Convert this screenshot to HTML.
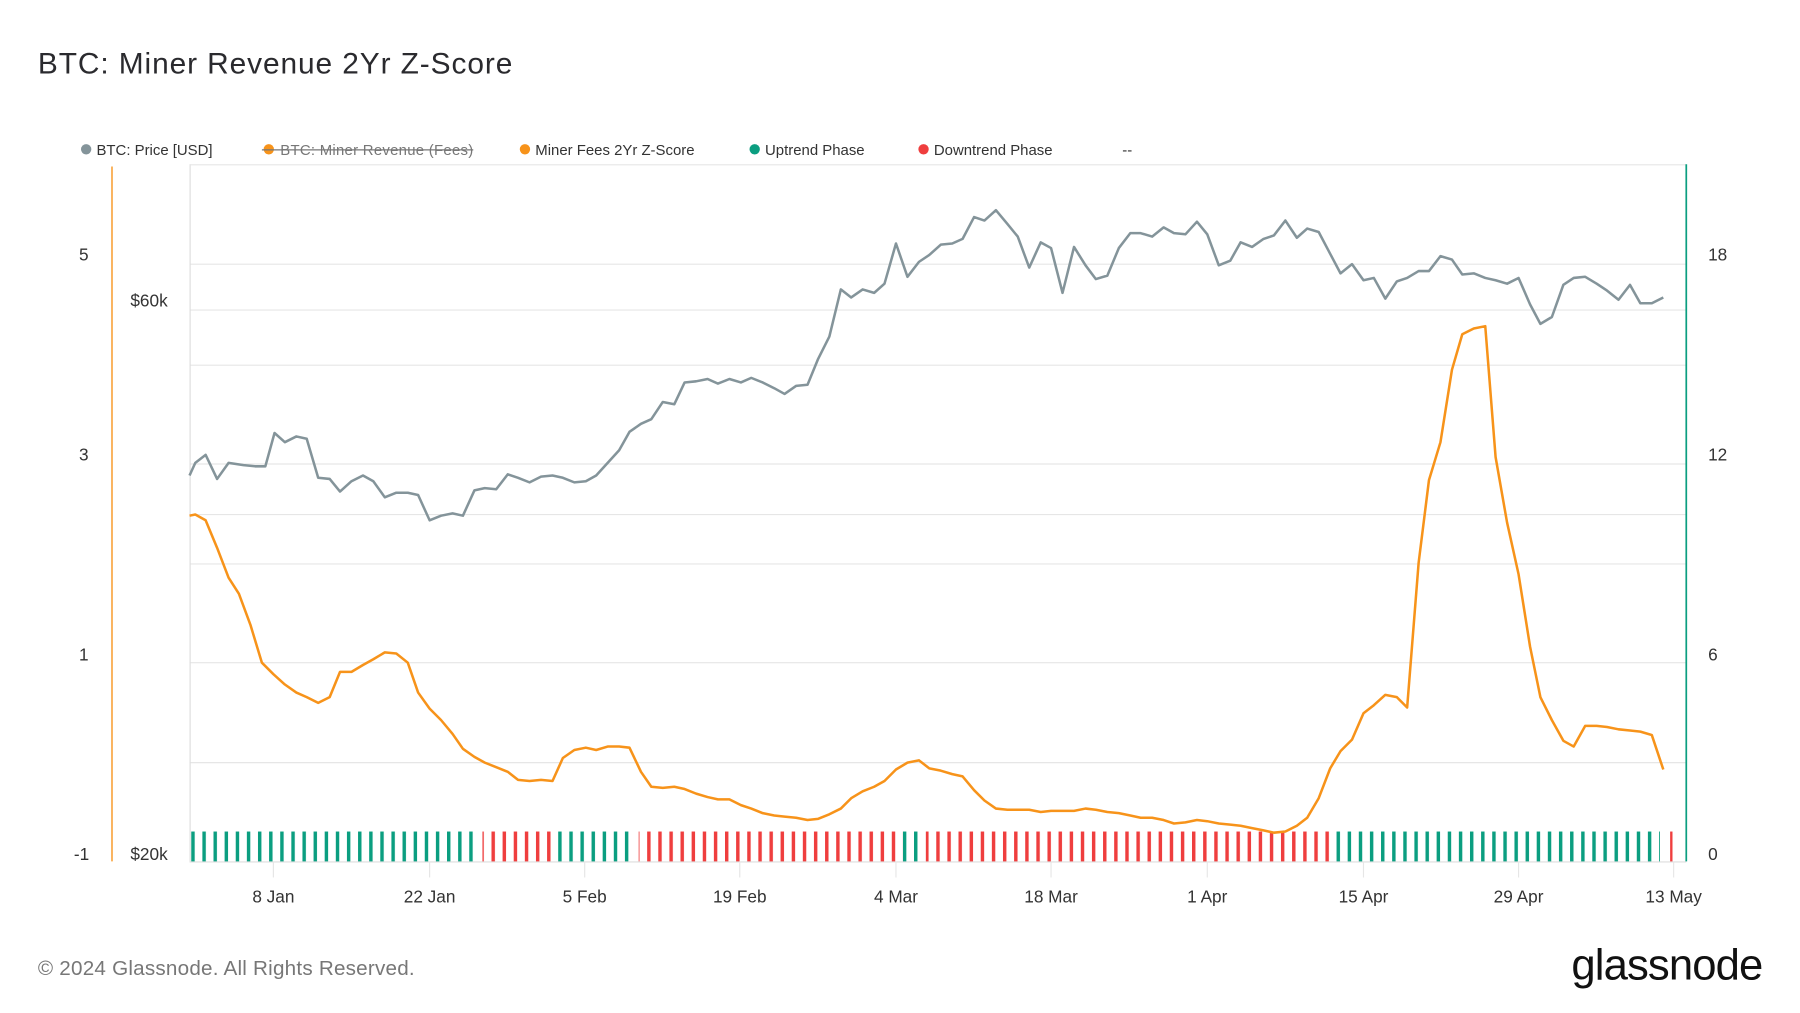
<!DOCTYPE html>
<html><head><meta charset="utf-8"><style>html,body{margin:0;padding:0;background:#fff;overflow:hidden}svg{display:block}</style></head><body>
<svg width="1800" height="1013" viewBox="0 0 1567 882" preserveAspectRatio="none" xmlns="http://www.w3.org/2000/svg" font-family="Liberation Sans, sans-serif">
<defs>
<pattern id="pg" patternUnits="userSpaceOnUse" x="166.5" y="0" width="9.68" height="900"><rect x="0" y="0" width="3" height="900" rx="1" fill="#0b9e80"/></pattern>
<pattern id="pr" patternUnits="userSpaceOnUse" x="166.5" y="0" width="9.68" height="900"><rect x="0" y="0" width="3" height="900" rx="1" fill="#ef3e3e"/></pattern>
</defs>
<rect width="1567" height="882" fill="#fff"/>
<text x="33" y="64" font-size="26" fill="#2a2a2e" textLength="413">BTC: Miner Revenue 2Yr Z-Score</text>
<g font-size="13" fill="#333">
<circle cx="75" cy="130" r="4.5" fill="#84949a"/><text x="84" y="135">BTC: Price [USD]</text>
<circle cx="234" cy="130" r="4.5" fill="#f7931a"/><text x="244" y="135" fill="#777" textLength="168">BTC: Miner Revenue (Fees)</text><line x1="228" y1="130.5" x2="412" y2="130.5" stroke="#777" stroke-width="1"/>
<circle cx="457" cy="130" r="4.5" fill="#f7931a"/><text x="466" y="135">Miner Fees 2Yr Z-Score</text>
<circle cx="657" cy="130" r="4.5" fill="#0b9e80"/><text x="666" y="135">Uptrend Phase</text>
<circle cx="804" cy="130" r="4.5" fill="#ef3e3e"/><text x="813" y="135">Downtrend Phase</text>
<text x="977" y="135">--</text>
</g>
<g stroke="#e6e6e6" stroke-width="1">
<line x1="165" y1="230" x2="1468" y2="230"/><line x1="165" y1="270" x2="1468" y2="270"/><line x1="165" y1="318" x2="1468" y2="318"/><line x1="165" y1="404" x2="1468" y2="404"/><line x1="165" y1="448" x2="1468" y2="448"/><line x1="165" y1="491" x2="1468" y2="491"/><line x1="165" y1="577" x2="1468" y2="577"/><line x1="165" y1="664" x2="1468" y2="664"/>
<line x1="165.5" y1="143" x2="165.5" y2="750" stroke="#ddd"/>
<line x1="165" y1="143.5" x2="1468" y2="143.5"/>
<line x1="165" y1="750.5" x2="1468" y2="750.5" stroke="#ddd"/>
<line x1="238" y1="750" x2="238" y2="764"/><line x1="374" y1="750" x2="374" y2="764"/><line x1="509" y1="750" x2="509" y2="764"/><line x1="644" y1="750" x2="644" y2="764"/><line x1="780" y1="750" x2="780" y2="764"/><line x1="915" y1="750" x2="915" y2="764"/><line x1="1051" y1="750" x2="1051" y2="764"/><line x1="1187" y1="750" x2="1187" y2="764"/><line x1="1322" y1="750" x2="1322" y2="764"/><line x1="1457" y1="750" x2="1457" y2="764"/>
</g>
<line x1="97.5" y1="145" x2="97.5" y2="750" stroke="#f7931a" stroke-width="1.2"/>
<line x1="1468" y1="143" x2="1468" y2="750" stroke="#0b9e80" stroke-width="1.5"/>
<g font-size="15" fill="#333">
<text x="73" y="227" text-anchor="middle">5</text><text x="73" y="401" text-anchor="middle">3</text><text x="73" y="575" text-anchor="middle">1</text><text x="71" y="749" text-anchor="middle">-1</text>
<text x="146" y="267" text-anchor="end">$60k</text><text x="146" y="749" text-anchor="end">$20k</text>
<text x="1487" y="227">18</text><text x="1487" y="401">12</text><text x="1487" y="575">6</text><text x="1487" y="749">0</text>
</g>
<g font-size="15" fill="#333" text-anchor="middle">
<text x="238" y="786">8 Jan</text><text x="374" y="786">22 Jan</text><text x="509" y="786">5 Feb</text><text x="644" y="786">19 Feb</text><text x="780" y="786">4 Mar</text><text x="915" y="786">18 Mar</text><text x="1051" y="786">1 Apr</text><text x="1187" y="786">15 Apr</text><text x="1322" y="786">29 Apr</text><text x="1457" y="786">13 May</text>
</g>
<rect x="165" y="724" width="251" height="26" fill="url(#pg)"/>
<rect x="420" y="724" width="65" height="26" fill="url(#pr)"/>
<rect x="485" y="724" width="65" height="26" fill="url(#pg)"/>
<rect x="556" y="724" width="230" height="26" fill="url(#pr)"/>
<rect x="786" y="724" width="14" height="26" fill="url(#pg)"/>
<rect x="806" y="724" width="356" height="26" fill="url(#pr)"/>
<rect x="1162" y="724" width="283" height="26" fill="url(#pg)"/>
<rect x="1448" y="724" width="8" height="26" fill="url(#pr)"/>
<polyline fill="none" stroke="#84949a" stroke-width="2.2" stroke-linejoin="round" points="165,414 170,403 179,396 189,417 199,403 212,405 222,406 231,406 239,377 248,385 258,380 267,382 277,416 287,417 296,428 306,419 316,414 325,419 335,433 345,429 355,429 364,431 374,453 384,449 394,447 403,449 413,427 422,425 432,426 442,413 451,416 461,420 471,415 481,414 490,416 500,420 510,419 519,414 529,403 539,392 548,376 558,369 567,365 577,350 587,352 596,333 606,332 616,330 625,334 635,330 645,333 654,329 664,333 674,338 683,343 693,336 703,335 712,313 722,293 732,252 741,259 751,252 761,255 770,247 780,212 790,241 800,228 809,222 819,213 829,212 838,208 848,189 857,192 867,183 877,195 886,206 896,233 906,211 915,216 925,255 935,215 945,231 954,243 964,240 974,216 984,203 993,203 1003,206 1013,198 1022,203 1032,204 1042,193 1051,204 1061,231 1071,227 1080,211 1090,215 1100,208 1109,205 1119,192 1129,207 1138,199 1148,202 1158,221 1167,238 1177,230 1187,244 1196,242 1206,260 1216,245 1225,242 1235,236 1244,236 1254,223 1264,226 1273,239 1283,238 1293,242 1302,244 1312,247 1322,242 1332,265 1341,282 1351,276 1361,248 1370,242 1380,241 1390,247 1399,253 1409,261 1419,248 1428,264 1438,264 1448,259"/>
<polyline fill="none" stroke="#f7931a" stroke-width="2.2" stroke-linejoin="round" points="165,449 170,448 179,453 189,477 199,503 208,517 218,544 228,577 238,587 248,596 258,603 267,607 277,612 287,607 296,585 306,585 316,579 325,574 335,568 345,569 355,577 364,603 374,617 384,627 394,639 403,652 413,659 422,664 432,668 442,672 451,679 461,680 471,679 481,680 490,660 500,653 510,651 519,653 529,650 539,650 548,651 558,672 567,685 577,686 587,685 596,687 606,691 616,694 625,696 635,696 645,701 654,704 664,708 674,710 683,711 693,712 703,714 712,713 722,709 732,704 741,695 751,689 761,685 770,680 780,670 790,664 800,662 809,669 819,671 829,674 838,676 848,688 857,697 867,704 877,705 886,705 896,705 906,707 915,706 925,706 935,706 945,704 954,705 964,707 974,708 984,710 993,712 1003,712 1013,714 1022,717 1032,716 1042,714 1051,715 1061,717 1071,718 1080,719 1090,721 1100,723 1109,725 1119,724 1129,719 1138,712 1148,695 1158,669 1167,654 1177,644 1187,621 1196,614 1206,605 1216,607 1225,616 1235,490 1244,418 1254,385 1264,322 1273,291 1283,286 1293,284 1302,398 1312,455 1322,500 1332,563 1341,607 1351,627 1361,645 1370,650 1380,632 1390,632 1399,633 1409,635 1419,636 1428,637 1438,640 1448,670"/>
<text x="33" y="849" font-size="18" fill="#777" textLength="328">© 2024 Glassnode. All Rights Reserved.</text>
<text x="1368" y="853" font-size="38" fill="#111" textLength="167">glassnode</text>
</svg>
</body></html>
